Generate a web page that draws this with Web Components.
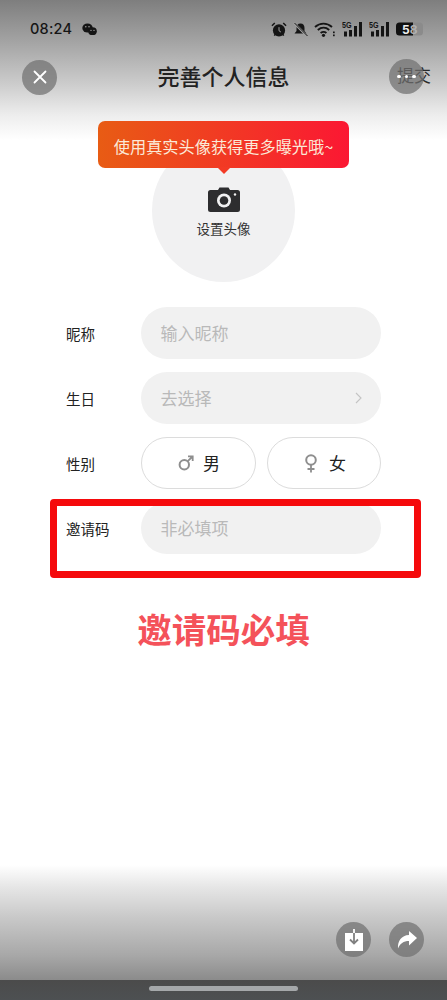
<!DOCTYPE html>
<html lang="zh"><head><meta charset="utf-8"><title>完善个人信息</title>
<style>
html,body{margin:0;padding:0;background:#fff;}
body{font-family:"Noto Sans CJK SC","Noto Sans",sans-serif;color:#222;}
</style></head><body>
<app-page>
  <status-bar></status-bar>
  <top-nav title="完善个人信息" action="提交"></top-nav>
  <avatar-picker tip="使用真实头像获得更多曝光哦~" label="设置头像"></avatar-picker>
  <info-form>
    <form-row label="昵称"><text-field placeholder="输入昵称"></text-field></form-row>
    <form-row label="生日"><text-field placeholder="去选择" chevron></text-field></form-row>
    <form-row label="性别"><gender-btn gender="m" label="男"></gender-btn><gender-btn gender="f" label="女"></gender-btn></form-row>
    <form-row label="邀请码"><text-field placeholder="非必填项"></text-field></form-row>
    <red-frame></red-frame>
  </info-form>
  <promo-text>邀请码必填</promo-text>
  <bottom-actions></bottom-actions>
  <nav-strip></nav-strip>
</app-page>
<script>
function def(name, html){
  customElements.define(name, class extends HTMLElement{
    connectedCallback(){
      if(this.shadowRoot) return;
      const r=this.attachShadow({mode:'open'});
      r.innerHTML=typeof html==='function'?html(this):html;
    }
  });
}
def('app-page',`<style>:host{display:flex;flex-direction:column;width:447px;height:1000px;overflow:hidden;position:relative;
background:linear-gradient(to bottom,#7e7e7e 0,#a2a2a2 40px,#cdcdcd 85px,#ededed 115px,#fff 140px,#fff 100%) top/100% 140px no-repeat,
linear-gradient(to bottom,#fff 0,#e6e6e6 22px,#c9c9c9 52px,#a8a8a8 90px,#8b8b8b 115px) left 865px/100% 115px no-repeat,#fff;}</style><slot></slot>`);
def('status-bar',`<style>:host{display:flex;align-items:center;height:58px;padding:0 0 0 30px;box-sizing:border-box;color:#151515;}
.t{font:500 14.5px/1 Inter,"Liberation Sans",sans-serif;letter-spacing:.2px;width:52px;}
.l{flex:1;display:flex;align-items:center}
.r{display:flex;align-items:center;margin-right:24px;}
svg{display:block}
</style>
<div class="l"><span class="t">08:24</span>
<svg width="15" height="13" viewBox="0 0 15 13"><ellipse cx="5.5" cy="5" rx="5.2" ry="4.6" fill="#151515"/><ellipse cx="10.5" cy="8.2" rx="4.3" ry="3.9" fill="#151515"/><circle cx="3.8" cy="3.8" r=".8" fill="#999"/><circle cx="7" cy="3.8" r=".8" fill="#999"/><circle cx="9" cy="7.4" r=".7" fill="#999"/><circle cx="12" cy="7.4" r=".7" fill="#999"/></svg></div>
<div class="r">
<svg width="16" height="17" viewBox="0 0 17 17" style="margin-right:6px"><circle cx="8.5" cy="9.5" r="6.5" fill="#151515"/><path d="M8.500 6v3.800l2 1.400" stroke="#aaa" stroke-width="1" fill="none"/><path d="M1 4.500 4 1.500M16 4.500 13 1.500M3.500 15l1.500-2M13.500 15l-1.500-2" stroke="#151515" stroke-width="1.600"/></svg>
<svg width="15" height="15" viewBox="0 0 15 15" style="margin-right:6px"><path d="M7.500 1.500c-2.800 0-4 2-4 4.500v3l-2 2.500h12l-2-2.500v-3c0-2.500-1.200-4.500-4-4.500z" fill="#151515"/><path d="M1 1l13 13" stroke="#a0a0a0" stroke-width="2.400"/><path d="M1.500 1l13 13" stroke="#151515" stroke-width="1"/></svg>
<svg width="21" height="15" viewBox="0 0 21 15" style="margin-right:7px"><path d="M1 5c5-4.500 12-4.500 17 0M3.800 8c3.500-3 8-3 11.400 0M6.600 11c2-1.500 4-1.500 5.800 0" fill="none" stroke="#151515" stroke-width="1.900"/><circle cx="9.500" cy="13.300" r="1.600" fill="#151515"/><rect x="19" y="9.500" width="1.700" height="1.700" fill="#151515"/><rect x="19" y="12.500" width="1.700" height="1.700" fill="#151515"/></svg>
<sig-5g style="margin-right:7px"></sig-5g><sig-5g style="margin-right:7px"></sig-5g>
<svg width="27" height="14" viewBox="0 0 27 14"><rect x="0" y=".5" width="27" height="13" rx="3.500" fill="#8b8b8b"/><path d="M3.500 .5H17v13H3.500A3.500 3.500 0 0 1 0 10V4A3.500 3.500 0 0 1 3.500 .5z" fill="#111"/><text x="6" y="11.500" font-family="Inter,'Liberation Sans',sans-serif" font-weight="700" font-size="12" fill="#eee">5<tspan fill="#b0b0b0">8</tspan></text></svg>
</div>`);
def('sig-5g',`<style>:host{display:block;width:20px;height:16px;position:relative;}
span{position:absolute;left:0;top:0;font:700 9px/9px "Liberation Sans",sans-serif;color:#151515;transform:scaleX(.8);transform-origin:left}
svg{display:block}</style><span>5G</span>
<svg width="20" height="16" viewBox="0 0 20 16"><rect x="2" y="10.500" width="3" height="5" fill="#151515"/><rect x="7" y="9" width="3" height="6.500" fill="#151515"/><rect x="12" y="5" width="3" height="10.500" fill="#151515"/><rect x="17" y="1" width="3" height="14.500" fill="#151515"/></svg>`);
def('round-btn',`<style>:host{display:flex;align-items:center;justify-content:center;width:35px;height:35px;border-radius:50%;background:rgba(112,112,112,.72);flex:none;}</style><slot></slot>`);
def('top-nav',el=>`<style>:host{display:flex;align-items:center;height:38px;position:relative;padding:0 16px 0 22px;box-sizing:border-box;}
h1{flex:1;margin:0;text-align:center;font:500 22px/34px "Noto Sans CJK SC",sans-serif;color:#222;padding:0 7px 4px 0;}
.a{font:400 17px/34px "Noto Sans CJK SC",sans-serif;color:#2a2a2a;padding-bottom:4px;}
round-btn.more{position:absolute;left:389px;top:1px;}
.d{width:3.500px;height:3.500px;border-radius:50%;background:#fff;margin:0 2px}
</style>
<round-btn><svg width="14" height="14" viewBox="0 0 14 14"><path d="M1.500 1.500l11 11M12.500 1.500l-11 11" stroke="#fff" stroke-width="1.800" stroke-linecap="round"/></svg></round-btn>
<h1>${el.getAttribute('title')}</h1><span class="a">${el.getAttribute('action')}</span>
<round-btn class="more"><i class="d"></i><i class="d"></i><i class="d"></i></round-btn>`);
def('avatar-picker',el=>`<style>:host{display:block;position:relative;height:143px;margin-top:43px;}
.c{width:143px;height:143px;border-radius:50%;background:#f1f1f2;margin-left:152px;display:flex;flex-direction:column;align-items:center;box-sizing:border-box;padding-top:48px;}
.c span{font:400 13.500px/18px "Noto Sans CJK SC",sans-serif;color:#333;margin-top:7px;}
svg{display:block}
.tip{position:absolute;left:98px;top:-18px;width:251px;height:47px;box-sizing:border-box;border-radius:7px;background:linear-gradient(90deg,#e85c14,#fb1733);color:#fbe9d8;font:400 16.200px/51px "Noto Sans CJK SC",sans-serif;text-align:center;white-space:nowrap;}
.tip:after{content:"";position:absolute;left:119px;top:46px;width:0;height:0;border:7px solid transparent;border-top-color:#f33a25;border-bottom:0;}
</style>
<div class="c"><svg width="32" height="25" viewBox="0 0 32 25"><path d="M10 3 11.500 .5h9L22 3h7.500A2.500 2.500 0 0 1 32 5.500V22.500A2.500 2.500 0 0 1 29.500 25h-27A2.500 2.500 0 0 1 0 22.500V5.500A2.500 2.500 0 0 1 2.500 3z" fill="#2d2d2f"/><circle cx="16" cy="13.500" r="7" fill="#f1f1f2"/><circle cx="16" cy="13.500" r="4.300" fill="#2d2d2f"/><circle cx="27" cy="7.500" r="1.200" fill="#f1f1f2"/></svg><span>${el.getAttribute('label')}</span></div>
<div class="tip">${el.getAttribute('tip')}</div>`);
def('info-form',`<style>:host{display:flex;flex-direction:column;gap:13px;margin-top:25px;position:relative;}</style><slot></slot>`);
def('form-row',el=>`<style>:host{display:flex;align-items:center;height:52px;padding-left:66px;}
.l{width:75px;flex:none;font:400 14.500px/20px "Noto Sans CJK SC",sans-serif;color:#222;padding-top:1px;}
.f{display:flex;gap:11px;width:240px;}
::slotted(*){flex:1}
::slotted([gender=m]){flex:0 0 115px}
</style><div class="l">${el.getAttribute('label')}</div><div class="f"><slot></slot></div>`);
def('text-field',el=>`<style>:host{display:flex;align-items:center;justify-content:space-between;height:52px;border-radius:26px;background:#f1f1f1;padding:0 19px 0 19.500px;box-sizing:border-box;font:400 17px/24px "Noto Sans CJK SC",sans-serif;color:#b9b9b9;}
svg{display:block}</style><span>${el.getAttribute('placeholder')}</span>${el.hasAttribute('chevron')?'<svg width="7" height="12" viewBox="0 0 7 12"><path d="M1 1l5 5-5 5" fill="none" stroke="#c4c4c4" stroke-width="1.100"/></svg>':''}`);
def('gender-btn',el=>{const m=el.getAttribute('gender')==='m';return `<style>:host{display:flex;align-items:center;justify-content:center;gap:${m?9:11}px;height:52px;border-radius:26px;border:1px solid #dcdcdc;box-sizing:border-box;font:400 17px/24px "Noto Sans CJK SC",sans-serif;color:#222;background:#fff;padding-left:${m?1:2}px}
svg{display:block}</style>${m?'<svg width="16" height="16" viewBox="0 0 16 16"><circle cx="6.300" cy="9.700" r="4.700" fill="none" stroke="#8e8e8e" stroke-width="2"/><path d="M9.800 6.200 14.500 1.500M10 1.300h4.700V6" fill="none" stroke="#8e8e8e" stroke-width="1.800"/></svg>':'<svg width="14" height="19" viewBox="0 0 14 19"><circle cx="7" cy="6" r="4.800" fill="none" stroke="#8e8e8e" stroke-width="2"/><path d="M7 11v7.500M3.500 15h7" stroke="#8e8e8e" stroke-width="1.800" fill="none"/></svg>'}<span>${el.getAttribute('label')}</span>`});
def('red-frame',`<style>:host{display:block;position:absolute;left:50px;top:192px;width:371px;height:79px;box-sizing:border-box;border:7px solid #f50a0c;border-radius:4px;pointer-events:none;}</style>`);
def('promo-text',`<style>:host{display:block;margin-top:49px;text-align:center;font:700 34.500px/50px "Noto Sans CJK SC",sans-serif;color:#f4525a;}</style><slot></slot>`);
def('bottom-actions',`<style>:host{display:flex;justify-content:flex-end;gap:18px;padding-right:23px;margin-top:auto;margin-bottom:23px;}svg{display:block}</style>
<round-btn><svg width="18" height="22" viewBox="0 0 18 22"><rect x="0" y="4" width="18" height="18" fill="#fff"/><rect x="8.100" y="0" width="1.800" height="4" fill="#fff"/><path d="M9 4v10.500M5 10.500l4 4 4-4" fill="none" stroke="#808080" stroke-width="1.800"/></svg></round-btn>
<round-btn><svg width="20" height="18" viewBox="0 0 20 18"><path d="M12 0l8 7-8 7.500V10C6.500 10 3 12.500 1 17.500 .5 10 4.500 4.300 12 4z" fill="#fff"/></svg></round-btn>`);
def('nav-strip',`<style>:host{display:flex;justify-content:center;align-items:center;height:20px;background:linear-gradient(#4b4b4b,#4d5052);flex:none}i{display:block;width:149px;height:5px;border-radius:3px;background:#a5a8aa;margin-top:-3px;margin-left:-1px}</style><i></i>`);
</script>
</body></html>
